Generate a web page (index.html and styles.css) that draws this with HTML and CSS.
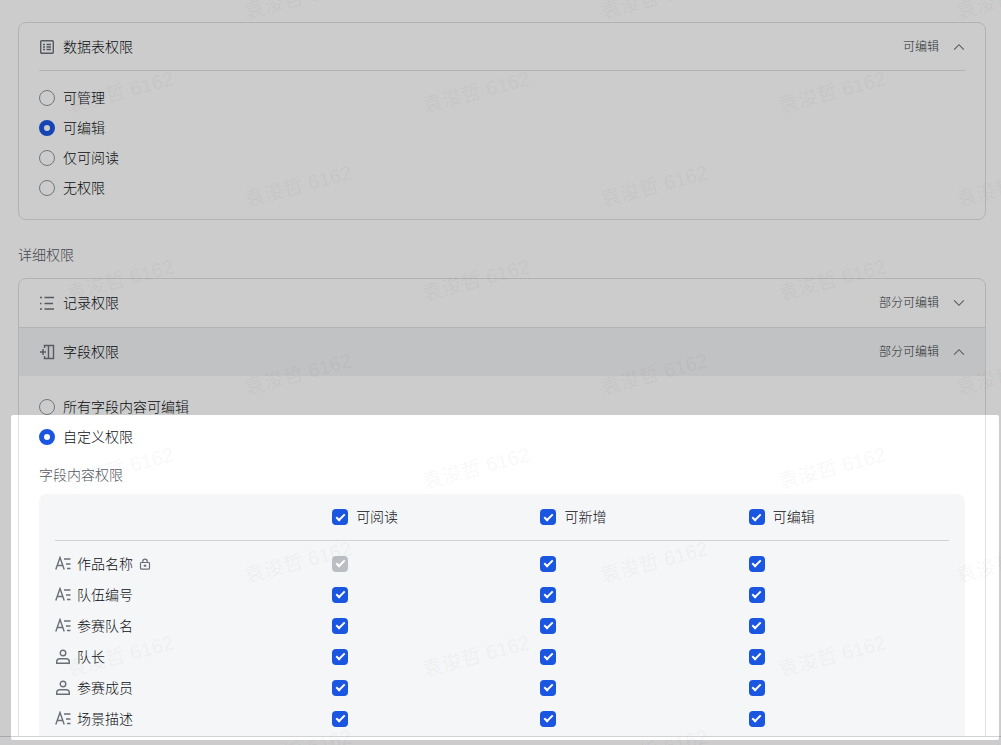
FILE: index.html
```html
<!DOCTYPE html>
<html lang="zh-CN">
<head>
  <meta charset="UTF-8">
  <meta name="viewport" content="width=device-width, initial-scale=1">
  <title>权限设置</title>
  <link rel="stylesheet" href="styles.css">
</head>
<body>
  <svg class="icon-defs" width="0" height="0" aria-hidden="true">
    <symbol id="icon-table" viewBox="0 0 16 16">
      <rect x="1.700" y="1.700" width="12.600" height="12.600" rx="1"/>
      <path d="M4 5.500h2M7.500 5.500H12M4 8h2M7.500 8H12M4 10.500h2M7.500 10.500H12"/>
    </symbol>
    <symbol id="icon-list" viewBox="0 0 16 16">
      <path d="M1 2.500h2M5.500 2.500H15M1 8.500h1.500M5.500 8.500H14M1 14h2M5.500 14H15"/>
    </symbol>
    <symbol id="icon-field" viewBox="0 0 16 16">
      <path d="M5.500 4V1.500h9v13h-9V12M9.500 1.500v13M1 8h6M4 5v6"/>
    </symbol>
    <symbol id="icon-text" viewBox="0 0 16 16">
      <path d="M.8 13.500 5 1.500l4.200 12M2.300 9.500h5.400M9 3h6.500M11 8h4.500M12 12.500h3.500"/>
    </symbol>
    <symbol id="icon-user" viewBox="0 0 16 16">
      <circle cx="8" cy="4" r="2.800"/>
      <path d="M1.700 14.300v-1.500a3 3 0 0 1 3-3h6.600a3 3 0 0 1 3 3v1.500z"/>
    </symbol>
    <symbol id="icon-lock" viewBox="0 0 16 16">
      <rect x="2" y="6" width="12" height="8.700" rx="1"/>
      <path d="M5 6V4.500a3 3 0 0 1 6 0V6M8 8.500v3.500M6.200 10.200h3.600"/>
    </symbol>
    <symbol id="icon-up" viewBox="0 0 16 16"><path d="M1.500 11.500 8 5l6.500 6.500"/></symbol>
    <symbol id="icon-down" viewBox="0 0 16 16"><path d="M1.500 4.500 8 11l6.500-6.500"/></symbol>
  </svg>

  <main class="content">
    <section class="card">
      <div class="card-inner">
        <button type="button" class="card-header" aria-expanded="true">
          <svg class="icon"><use href="#icon-table"/></svg>
          <span>数据表权限</span>
          <span class="summary">可编辑</span>
          <svg class="arrow"><use href="#icon-up"/></svg>
        </button>
        <div class="radio-list">
          <label class="radio"><input type="radio" name="table-perm">可管理</label>
          <label class="radio"><input type="radio" name="table-perm" checked>可编辑</label>
          <label class="radio"><input type="radio" name="table-perm">仅可阅读</label>
          <label class="radio"><input type="radio" name="table-perm">无权限</label>
        </div>
      </div>
    </section>

    <h2 class="section-title">详细权限</h2>

    <section class="card">
      <button type="button" class="panel-header" aria-expanded="false">
        <svg class="icon"><use href="#icon-list"/></svg>
        <span>记录权限</span>
        <span class="summary">部分可编辑</span>
        <svg class="arrow"><use href="#icon-down"/></svg>
      </button>
      <button type="button" class="panel-header active" aria-expanded="true">
        <svg class="icon"><use href="#icon-field"/></svg>
        <span>字段权限</span>
        <span class="summary">部分可编辑</span>
        <svg class="arrow"><use href="#icon-up"/></svg>
      </button>
      <div class="panel-body">
        <label class="radio"><input type="radio" name="field-perm">所有字段内容可编辑</label>
        <label class="radio"><input type="radio" name="field-perm" checked>自定义权限</label>
        <h3 class="field-title">字段内容权限</h3>
        <div class="field-box">
          <table class="field-table">
            <thead>
              <tr>
                <th class="col-name"></th>
                <th class="col-perm"><label class="check"><input type="checkbox" checked>可阅读</label></th>
                <th class="col-perm"><label class="check"><input type="checkbox" checked>可新增</label></th>
                <th><label class="check"><input type="checkbox" checked>可编辑</label></th>
              </tr>
            </thead>
            <tbody>
              <tr>
                <td><div class="field-name"><svg class="icon"><use href="#icon-text"/></svg>作品名称<svg class="lock"><use href="#icon-lock"/></svg></div></td>
                <td><input type="checkbox" aria-label="作品名称 可阅读" checked disabled></td>
                <td><input type="checkbox" aria-label="作品名称 可新增" checked></td>
                <td><input type="checkbox" aria-label="作品名称 可编辑" checked></td>
              </tr>
              <tr>
                <td><div class="field-name"><svg class="icon"><use href="#icon-text"/></svg>队伍编号</div></td>
                <td><input type="checkbox" aria-label="队伍编号 可阅读" checked></td>
                <td><input type="checkbox" aria-label="队伍编号 可新增" checked></td>
                <td><input type="checkbox" aria-label="队伍编号 可编辑" checked></td>
              </tr>
              <tr>
                <td><div class="field-name"><svg class="icon"><use href="#icon-text"/></svg>参赛队名</div></td>
                <td><input type="checkbox" aria-label="参赛队名 可阅读" checked></td>
                <td><input type="checkbox" aria-label="参赛队名 可新增" checked></td>
                <td><input type="checkbox" aria-label="参赛队名 可编辑" checked></td>
              </tr>
              <tr>
                <td><div class="field-name"><svg class="icon"><use href="#icon-user"/></svg>队长</div></td>
                <td><input type="checkbox" aria-label="队长 可阅读" checked></td>
                <td><input type="checkbox" aria-label="队长 可新增" checked></td>
                <td><input type="checkbox" aria-label="队长 可编辑" checked></td>
              </tr>
              <tr>
                <td><div class="field-name"><svg class="icon"><use href="#icon-user"/></svg>参赛成员</div></td>
                <td><input type="checkbox" aria-label="参赛成员 可阅读" checked></td>
                <td><input type="checkbox" aria-label="参赛成员 可新增" checked></td>
                <td><input type="checkbox" aria-label="参赛成员 可编辑" checked></td>
              </tr>
              <tr>
                <td><div class="field-name"><svg class="icon"><use href="#icon-text"/></svg>场景描述</div></td>
                <td><input type="checkbox" aria-label="场景描述 可阅读" checked></td>
                <td><input type="checkbox" aria-label="场景描述 可新增" checked></td>
                <td><input type="checkbox" aria-label="场景描述 可编辑" checked></td>
              </tr>
            </tbody>
          </table>
        </div>
      </div>
    </section>
  </main>
  <footer class="footer"></footer>

  <div class="watermark" aria-hidden="true">
    <div class="wm-row"><span>袁浚哲 6162</span><span>袁浚哲 6162</span><span>袁浚哲 6162</span></div>
    <div class="wm-row"><span>袁浚哲 6162</span><span>袁浚哲 6162</span><span>袁浚哲 6162</span></div>
    <div class="wm-row"><span>袁浚哲 6162</span><span>袁浚哲 6162</span><span>袁浚哲 6162</span></div>
    <div class="wm-row"><span>袁浚哲 6162</span><span>袁浚哲 6162</span><span>袁浚哲 6162</span></div>
    <div class="wm-row"><span>袁浚哲 6162</span><span>袁浚哲 6162</span><span>袁浚哲 6162</span></div>
    <div class="wm-row"><span>袁浚哲 6162</span><span>袁浚哲 6162</span><span>袁浚哲 6162</span></div>
    <div class="wm-row"><span>袁浚哲 6162</span><span>袁浚哲 6162</span><span>袁浚哲 6162</span></div>
    <div class="wm-row"><span>袁浚哲 6162</span><span>袁浚哲 6162</span><span>袁浚哲 6162</span></div>
    <div class="wm-row"><span>袁浚哲 6162</span><span>袁浚哲 6162</span><span>袁浚哲 6162</span></div>
  </div>
  <div class="spotlight"></div>
</body>
</html>
```
FILE: styles.css
```css
:root {
  --primary: #1b56e0;
  --text: #0c0f14;
  --text-secondary: #545a63;
  --icon: #6b7078;
  --border: #dee0e3;
  --bg-hover: #f2f3f5;
  --bg-box: #f5f6f7;
}

* {
  box-sizing: border-box;
}

body {
  margin: 0;
  height: 100vh;
  display: flex;
  flex-direction: column;
  position: relative;
  overflow: hidden;
  background: #fff;
  color: var(--text);
  font-family: "Liberation Sans", "Noto Sans CJK SC", sans-serif;
  font-size: 14px;
  font-weight: 300;
  line-height: 22px;
}

.icon-defs {
  position: absolute;
}

.content {
  flex: 1;
  min-height: 0;
  overflow: hidden;
  padding: 22px 15px 0 18px;
}

.footer {
  height: 9px;
  border-top: 1px solid #d0d3d6;
}

/* cards */
.card {
  border: 1px solid var(--border);
  border-radius: 8px;
  overflow: hidden;
}

.card-inner {
  padding: 0 20px 16px;
}

.card-header,
.panel-header {
  display: flex;
  align-items: center;
  gap: 8px;
  width: 100%;
  height: 48px;
  padding: 0;
  border: 0;
  border-bottom: 1px solid var(--border);
  background: none;
  color: inherit;
  font: inherit;
  text-align: left;
}

.panel-header {
  height: 49px;
  padding: 0 20px;
}

.panel-header.active {
  height: 48px;
  border-bottom: 0;
  background: var(--bg-hover);
}

.summary {
  margin-left: auto;
  margin-right: 6px;
  color: #30353c;
  font-size: 12px;
}

.icon,
.arrow,
.lock {
  flex: none;
  width: 16px;
  height: 16px;
  fill: none;
  stroke: var(--icon);
  stroke-width: 1.4;
}

.arrow {
  width: 12px;
  height: 12px;
}

.lock {
  width: 12px;
  height: 12px;
  stroke-width: 1.6;
}

/* radios */
.radio-list {
  padding-top: 12px;
}

.radio {
  display: flex;
  align-items: center;
  gap: 8px;
  height: 30px;
}

input[type="radio"] {
  appearance: none;
  width: 16px;
  height: 16px;
  margin: 0;
  border: 1px solid #8f959e;
  border-radius: 50%;
  background: #fff;
}

input[type="radio"]:checked {
  border: 5px solid var(--primary);
}

/* checkboxes */
.check {
  display: flex;
  align-items: center;
  gap: 8px;
}

input[type="checkbox"] {
  appearance: none;
  display: grid;
  place-items: center;
  width: 16px;
  height: 16px;
  margin: 0;
  border-radius: 4px;
  background: var(--primary);
}

input[type="checkbox"]::before {
  content: "";
  width: 9px;
  height: 5px;
  margin-bottom: 2px;
  border: solid #fff;
  border-width: 0 0 2px 2px;
  box-sizing: border-box;
  transform: rotate(-45deg);
}

input[type="checkbox"]:disabled {
  background: #bbbfc4;
}

.section-title {
  margin: 24px 0 12px;
  color: var(--text-secondary);
  font-size: 14px;
  font-weight: 300;
}

.panel-body {
  padding: 16px 20px;
}

.field-title {
  margin: 12px 0 8px;
  color: var(--text-secondary);
  font-size: 14px;
  font-weight: 300;
}

/* field table */
.field-box {
  padding: 0 16px 8px;
  border-radius: 8px;
  background: var(--bg-box);
}

.field-table {
  width: 100%;
  table-layout: fixed;
  border-collapse: separate;
  border-spacing: 0;
}

.col-name {
  width: 31%;
}

.col-perm {
  width: 23.3%;
}

.field-table th {
  height: 47px;
  padding: 0;
  border-bottom: 1px solid #d0d3d6;
  font-weight: 300;
  text-align: left;
}

.field-table td {
  height: 31px;
  padding: 0;
}

.field-table tbody::before {
  content: "";
  display: block;
  height: 7px;
}

.field-name {
  display: flex;
  align-items: center;
  gap: 6px;
}

/* watermark layer */
.watermark {
  position: absolute;
  inset: 0;
  overflow: hidden;
  pointer-events: none;
  color: rgba(31, 35, 41, 0.05);
  font-size: 20px;
  font-weight: 400;
}

.wm-row {
  display: flex;
  margin-left: 120px;
}

.wm-row:first-child {
  margin-top: -49px;
}

.wm-row:nth-child(even) {
  margin-left: -58px;
}

.wm-row span {
  flex: none;
  width: 356px;
  height: 94px;
  line-height: 94px;
  text-align: center;
  transform: rotate(-15deg);
}

/* dims everything outside the highlighted area */
.spotlight {
  position: absolute;
  top: 415px;
  right: 2px;
  bottom: 5px;
  left: 11px;
  border-radius: 2px;
  box-shadow: 0 0 5px 2000px rgba(0, 0, 0, 0.2);
  pointer-events: none;
}
```
